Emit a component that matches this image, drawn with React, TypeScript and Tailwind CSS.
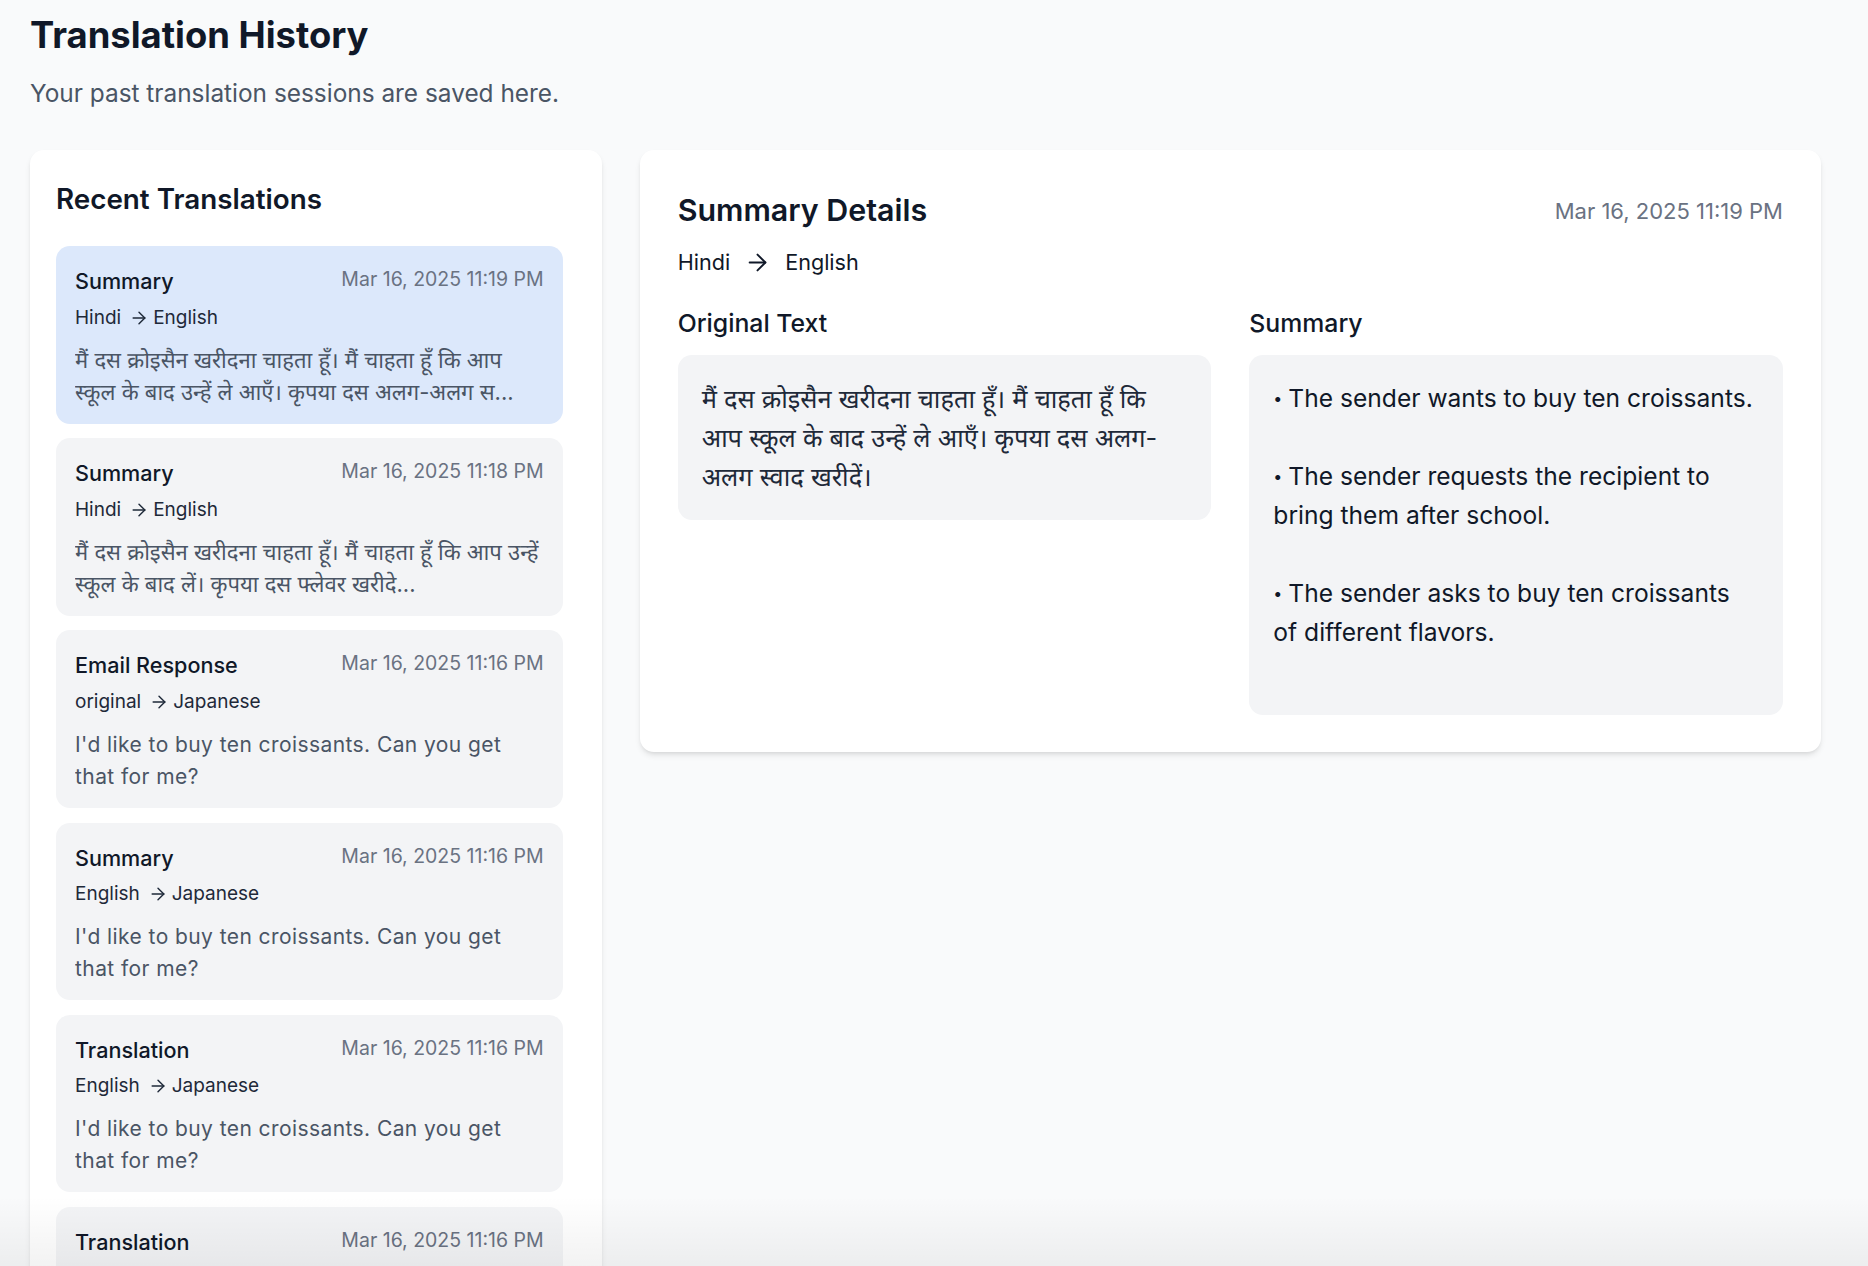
import { ArrowRight } from "lucide-react";

type HistoryItem = {
  id: number;
  kind: string;
  time: string;
  from: string;
  to: string;
  text: string;
  hindi?: boolean;
};

const items: HistoryItem[] = [
  {
    id: 1,
    kind: "Summary",
    time: "Mar 16, 2025 11:19 PM",
    from: "Hindi",
    to: "English",
    text: "मैं दस क्रोइसैन खरीदना चाहता हूँ। मैं चाहता हूँ कि आप स्कूल के बाद उन्हें ले आएँ। कृपया दस अलग-अलग स...",
    hindi: true,
  },
  {
    id: 2,
    kind: "Summary",
    time: "Mar 16, 2025 11:18 PM",
    from: "Hindi",
    to: "English",
    text: "मैं दस क्रोइसैन खरीदना चाहता हूँ। मैं चाहता हूँ कि आप उन्हें स्कूल के बाद लें। कृपया दस फ्लेवर खरीदे...",
    hindi: true,
  },
  {
    id: 3,
    kind: "Email Response",
    time: "Mar 16, 2025 11:16 PM",
    from: "original",
    to: "Japanese",
    text: "I'd like to buy ten croissants. Can you get that for me?",
  },
  {
    id: 4,
    kind: "Summary",
    time: "Mar 16, 2025 11:16 PM",
    from: "English",
    to: "Japanese",
    text: "I'd like to buy ten croissants. Can you get that for me?",
  },
  {
    id: 5,
    kind: "Translation",
    time: "Mar 16, 2025 11:16 PM",
    from: "English",
    to: "Japanese",
    text: "I'd like to buy ten croissants. Can you get that for me?",
  },
  {
    id: 6,
    kind: "Translation",
    time: "Mar 16, 2025 11:16 PM",
    from: "English",
    to: "Japanese",
    text: "I'd like to buy ten croissants. Can you get that for me?",
  },
];

const summaryPoints = [
  "The sender wants to buy ten croissants.",
  "The sender requests the recipient to bring them after school.",
  "The sender asks to buy ten croissants of different flavors.",
];

function HistoryCard({ item, active }: { item: HistoryItem; active: boolean }) {
  return (
    <div
      className={`rounded-[14px] px-[19px] pt-[19px] pb-[15.6px] ${active ? "bg-[#dce8fb]" : "bg-gray-100"}`}
    >
      <div className="flex items-start justify-between">
        <span className="text-[21.6px] leading-[33.6px] font-medium text-gray-900">{item.kind}</span>
        <span className="text-[19.5px] leading-[28px] text-gray-500">{item.time}</span>
      </div>
      <div className="mt-[8px] flex items-center text-[19px] leading-[22px] text-gray-800">
        <span>{item.from}</span>
        <ArrowRight className="ml-[8px] mr-[4px] h-[20px] w-[20px]" strokeWidth={1.7} />
        <span>{item.to}</span>
      </div>
      <p
        className={`mt-[15.6px] line-clamp-2 leading-[32px] text-gray-600 ${
          item.hindi ? "text-[22.05px]" : "text-[21px] tracking-[0.02em]"
        }`}
      >
        {item.text}
      </p>
    </div>
  );
}

export default function App() {
  return (
    <div className="relative h-[1266px] overflow-hidden bg-gray-50 font-['Inter','Noto_Sans_Devanagari','Lohit_Devanagari','Noto_Sans',sans-serif]">
      <div className="pl-[30px] pr-[47px] pt-[14px]">
        <h1 className="text-[36.4px] leading-[43px] font-bold text-gray-900">Translation History</h1>
        <p className="mt-[19px] text-[24.4px] leading-[34px] text-gray-600">
          Your past translation sessions are saved here.
        </p>

        <div className="mt-[40px] grid grid-cols-3 items-start gap-[38px]">
          {/* History list */}
          <section className="col-span-1 rounded-[14px] bg-white pt-[30px] pl-[26px] pr-[39px] pb-[26px] shadow-md">
            <h2 className="text-[27.8px] leading-[38px] font-semibold text-gray-900">Recent Translations</h2>
            <div className="mt-[28px] flex flex-col gap-[14.4px]">
              {items.map((item, i) => (
                <HistoryCard key={item.id} item={item} active={i === 0} />
              ))}
            </div>
          </section>

          {/* Detail */}
          <section className="col-span-2 rounded-[14px] bg-white px-[38px] pt-[39px] pb-[37px] shadow-md">
            <div className="flex items-center justify-between">
              <h2 className="text-[30.4px] leading-[43px] font-semibold text-gray-900">Summary Details</h2>
              <span className="text-[22px] leading-[30px] text-gray-500">Mar 16, 2025 11:19 PM</span>
            </div>
            <div className="mt-[14px] flex items-center gap-[14px] text-[21.6px] leading-[32px] text-gray-900">
              <span>Hindi</span>
              <ArrowRight className="h-[27px] w-[27px]" strokeWidth={1.7} />
              <span>English</span>
            </div>

            <div className="mt-[29px] grid grid-cols-2 items-start gap-[38px]">
              <div>
                <h3 className="mb-[14px] text-[24.8px] leading-[33.6px] font-medium text-gray-900">Original Text</h3>
                <div className="rounded-[14px] bg-gray-100 p-[24px] text-[25.4px] leading-[39px] text-gray-800">
                  मैं दस क्रोइसैन खरीदना चाहता हूँ। मैं चाहता हूँ कि आप स्कूल के बाद उन्हें ले आएँ। कृपया दस अलग-अलग स्वाद खरीदें।
                </div>
              </div>
              <div>
                <h3 className="mb-[14px] text-[24.8px] leading-[33.6px] font-medium text-gray-900">Summary</h3>
                <div className="rounded-[14px] bg-gray-100 px-[24px] pt-[24px] pb-[63px] text-[24.6px] leading-[39px] text-gray-900">
                  {summaryPoints.map((point, i) => (
                    <p key={i} className={i > 0 ? "mt-[39px]" : ""}>
                      <span className="mr-[6px] inline-block text-[16px] leading-[16px] align-[3px]">•</span>
                      {point}
                    </p>
                  ))}
                </div>
              </div>
            </div>
          </section>
        </div>
      </div>

      {/* bottom fade */}
      <div className="pointer-events-none absolute inset-x-0 bottom-0 h-[70px] bg-gradient-to-b from-transparent to-black/[0.05]" />
    </div>
  );
}
